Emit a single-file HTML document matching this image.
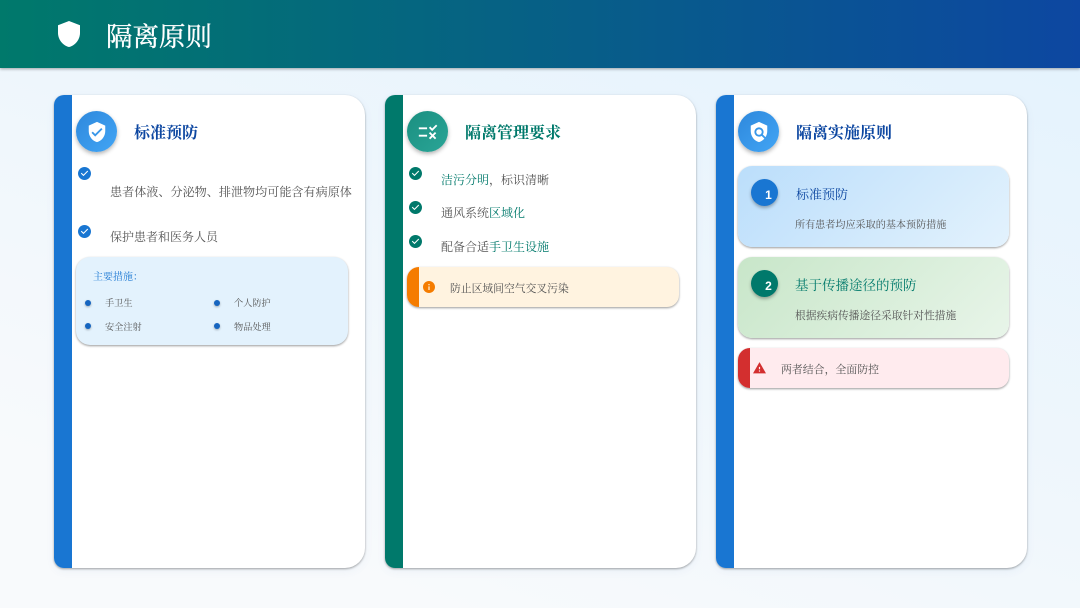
<!DOCTYPE html>
<html lang="zh-CN">
<head>
<meta charset="utf-8">
<style>
html,body{margin:0;padding:0;width:1080px;height:608px;overflow:hidden}
body{position:relative;background:linear-gradient(200deg,#e3f2fd 0%,#f8fafc 85%);font-family:"Liberation Serif","Noto Serif CJK SC",serif;}
.a{position:absolute;white-space:nowrap}
.hdr{left:0;top:0;width:1080px;height:67.5px;background:linear-gradient(90deg,#00796b 0%,#0d47a1 100%);box-shadow:0 1px 3px rgba(0,0,0,.35)}
.card{top:95px;width:310.5px;height:473px;background:#fff;border-radius:10px 20px 20px 10px;box-shadow:0 1px 2px rgba(0,0,0,.35),0 3px 10px rgba(13,71,161,.05);overflow:hidden}
.strip{position:absolute;left:0;top:0;bottom:0;width:17.5px}
.ic{width:41px;height:41px;border-radius:50%;top:111px;box-shadow:0 2px 4px rgba(0,0,0,.3)}
.ic svg{position:absolute;left:9.5px;top:9.5px;width:22px;height:22px;fill:#fff}
.t{font-size:16px;font-weight:700;line-height:22px;top:123px}
.li{font-size:12px;line-height:16px;color:#555}
.chk{width:13px;height:13px}
.sm{font-size:9.2px;line-height:12px;color:#555}
.dot{width:6px;height:6px;border-radius:50%;background:#1565c0;box-shadow:0 1px 2px rgba(0,0,0,.3)}
.box{border-radius:14px;box-shadow:0 1px 2px rgba(0,0,0,.4)}
.note{border-radius:12px;overflow:hidden;box-shadow:0 1px 2px rgba(0,0,0,.4)}
.num{width:27px;height:27px;border-radius:50%;color:#fff;font:700 12px/32px "Liberation Sans",sans-serif;text-align:center;text-indent:8px;box-shadow:0 2px 3px rgba(0,0,0,.3)}
.g{color:#00796b}
</style>
</head>
<body>
<div class="a hdr"></div>
<svg class="a" style="left:58px;top:21px;width:22px;height:26px;fill:#fff" viewBox="3 1 18 22" preserveAspectRatio="none"><path d="M12 1L3 4.6v6.4c0 5.55 3.84 10.74 9 12 5.16-1.26 9-6.45 9-12V4.6L12 1z"/></svg>
<div class="a" style="left:106px;top:18px;font-size:26.5px;line-height:38px;color:#fff;-webkit-text-stroke:.35px #fff">隔离原则</div>

<!-- Card 1 -->
<div class="a card" style="left:54px"><div class="strip" style="background:#1976d2"></div></div>
<div class="a ic" style="left:76px;background:linear-gradient(135deg,#2e88dc,#42a5f5)"><svg viewBox="0 0 24 24"><path d="M12 1L3 5v6c0 5.55 3.84 10.74 9 12 5.16-1.26 9-6.45 9-12V5l-9-4zm-2 16l-4-4 1.41-1.41L10 14.17l6.59-6.59L18 9l-8 8z"/></svg></div>
<div class="a t" style="left:134px;color:#0d47a1">标准预防</div>
<svg class="a chk" style="left:78px;top:167px;fill:#1976d2" viewBox="2 2 20 20"><path d="M12 2C6.48 2 2 6.48 2 12s4.48 10 10 10 10-4.48 10-10S17.52 2 12 2z"/><path fill="#fff" d="M10 17l-5-5 1.41-1.41L10 14.17l7.59-7.59L19 8z" transform="translate(2.4 2.4) scale(.8)"/></svg>
<div class="a li" style="left:110px;top:184px;font-size:12.1px">患者体液、分泌物、排泄物均可能含有病原体</div>
<svg class="a chk" style="left:78px;top:225px;fill:#1976d2" viewBox="2 2 20 20"><path d="M12 2C6.48 2 2 6.48 2 12s4.48 10 10 10 10-4.48 10-10S17.52 2 12 2z"/><path fill="#fff" d="M10 17l-5-5 1.41-1.41L10 14.17l7.59-7.59L19 8z" transform="translate(2.4 2.4) scale(.8)"/></svg>
<div class="a li" style="left:110px;top:229px">保护患者和医务人员</div>
<div class="a box" style="left:76px;top:257px;width:272px;height:88px;background:#e3f2fd"></div>
<div class="a sm" style="left:93px;top:272px;font-size:10px;color:#1976d2">主要措施：</div>
<div class="a dot" style="left:85px;top:300px"></div><div class="a sm" style="left:105px;top:297px">手卫生</div>
<div class="a dot" style="left:214px;top:300px"></div><div class="a sm" style="left:234px;top:297px">个人防护</div>
<div class="a dot" style="left:85px;top:323px"></div><div class="a sm" style="left:105px;top:321px">安全注射</div>
<div class="a dot" style="left:214px;top:323px"></div><div class="a sm" style="left:234px;top:321px">物品处理</div>

<!-- Card 2 -->
<div class="a card" style="left:385px"><div class="strip" style="background:#00796b"></div></div>
<div class="a ic" style="left:407px;background:linear-gradient(135deg,#1a8f80,#2aa597)"><svg viewBox="0 0 24 24"><path d="M16.54 11L13 7.46l1.41-1.41 2.12 2.12 4.24-4.24 1.41 1.41L16.54 11zM11 7H2v2h9V7zm10 6.41L19.59 12 17 14.59 14.41 12 13 13.41 15.59 16 13 18.59 14.41 20 17 17.41 19.59 20 21 18.59 18.41 16 21 13.41zM11 15H2v2h9v-2z"/></svg></div>
<div class="a t" style="left:465px;color:#00796b">隔离管理要求</div>
<svg class="a chk" style="left:408.5px;top:167px;fill:#00796b" viewBox="2 2 20 20"><path d="M12 2C6.48 2 2 6.48 2 12s4.48 10 10 10 10-4.48 10-10S17.52 2 12 2z"/><path fill="#fff" d="M10 17l-5-5 1.41-1.41L10 14.17l7.59-7.59L19 8z" transform="translate(2.4 2.4) scale(.8)"/></svg>
<div class="a li" style="left:441px;top:172px"><span class="g">洁污分明</span>，标识清晰</div>
<svg class="a chk" style="left:408.5px;top:201px;fill:#00796b" viewBox="2 2 20 20"><path d="M12 2C6.48 2 2 6.48 2 12s4.48 10 10 10 10-4.48 10-10S17.52 2 12 2z"/><path fill="#fff" d="M10 17l-5-5 1.41-1.41L10 14.17l7.59-7.59L19 8z" transform="translate(2.4 2.4) scale(.8)"/></svg>
<div class="a li" style="left:441px;top:205px">通风系统<span class="g">区域化</span></div>
<svg class="a chk" style="left:408.5px;top:235px;fill:#00796b" viewBox="2 2 20 20"><path d="M12 2C6.48 2 2 6.48 2 12s4.48 10 10 10 10-4.48 10-10S17.52 2 12 2z"/><path fill="#fff" d="M10 17l-5-5 1.41-1.41L10 14.17l7.59-7.59L19 8z" transform="translate(2.4 2.4) scale(.8)"/></svg>
<div class="a li" style="left:441px;top:239px">配备合适<span class="g">手卫生设施</span></div>
<div class="a note" style="left:407px;top:267px;width:272px;height:40px;background:#fff3e0"><div style="position:absolute;left:0;top:0;bottom:0;width:12px;background:#f57c00"></div></div>
<svg class="a" style="left:423px;top:281px;width:12px;height:12px;fill:#f57c00" viewBox="2 2 20 20"><path d="M12 2C6.48 2 2 6.48 2 12s4.48 10 10 10 10-4.48 10-10S17.52 2 12 2zm1 15h-2v-6h2v6zm0-8h-2V7h2v2z"/></svg>
<div class="a sm" style="left:450px;top:282px;font-size:10.8px;line-height:14px">防止区域间空气交叉污染</div>

<!-- Card 3 -->
<div class="a card" style="left:716px"><div class="strip" style="background:#1976d2"></div></div>
<div class="a ic" style="left:738px;background:linear-gradient(135deg,#2e88dc,#42a5f5)"><svg viewBox="0 0 24 24"><path d="M21,5l-9-4L3,5v6c0,5.55,3.84,10.74,9,12c2.3-0.56,4.33-1.9,5.88-3.71l-3.12-3.12c-1.94,1.29-4.58,1.07-6.29-0.64c-1.95-1.95-1.95-5.12,0-7.07c1.95-1.95,5.12-1.95,7.07,0c1.71,1.71,1.92,4.35,0.64,6.29l2.9,2.9C20.29,15.69,21,13.38,21,11V5z"/><circle cx="12" cy="12" r="3"/></svg></div>
<div class="a t" style="left:796px;color:#0d47a1">隔离实施原则</div>
<div class="a box" style="left:738px;top:166px;width:271px;height:81px;background:linear-gradient(135deg,#bbdefb,#e3f2fd)"></div>
<div class="a num" style="left:751px;top:179px;background:#1976d2">1</div>
<div class="a" style="left:796px;top:186px;font-size:13px;line-height:18px;color:#0d47a1">标准预防</div>
<div class="a sm" style="left:795px;top:219px;font-size:10.1px;line-height:14px">所有患者均应采取的基本预防措施</div>
<div class="a box" style="left:738px;top:257px;width:271px;height:81px;background:linear-gradient(135deg,#c8e6c9,#e8f5e9)"></div>
<div class="a num" style="left:751px;top:270px;background:#00796b">2</div>
<div class="a" style="left:795px;top:277px;font-size:13.5px;line-height:18px;color:#00796b">基于传播途径的预防</div>
<div class="a sm" style="left:795px;top:309px;font-size:10.75px;line-height:14px">根据疾病传播途径采取针对性措施</div>
<div class="a note" style="left:738px;top:348px;width:271px;height:40px;background:#ffebee"><div style="position:absolute;left:0;top:0;bottom:0;width:12px;background:#d32f2f"></div></div>
<svg class="a" style="left:753px;top:362px;width:13px;height:11.5px;fill:#d32f2f" viewBox="1 2 22 19"><path d="M1 21h22L12 2 1 21zm12-3h-2v-2h2v2zm0-4h-2v-4h2v4z"/></svg>
<div class="a sm" style="left:781px;top:363px;font-size:10.9px;line-height:14px">两者结合，全面防控</div>
</body>
</html>
